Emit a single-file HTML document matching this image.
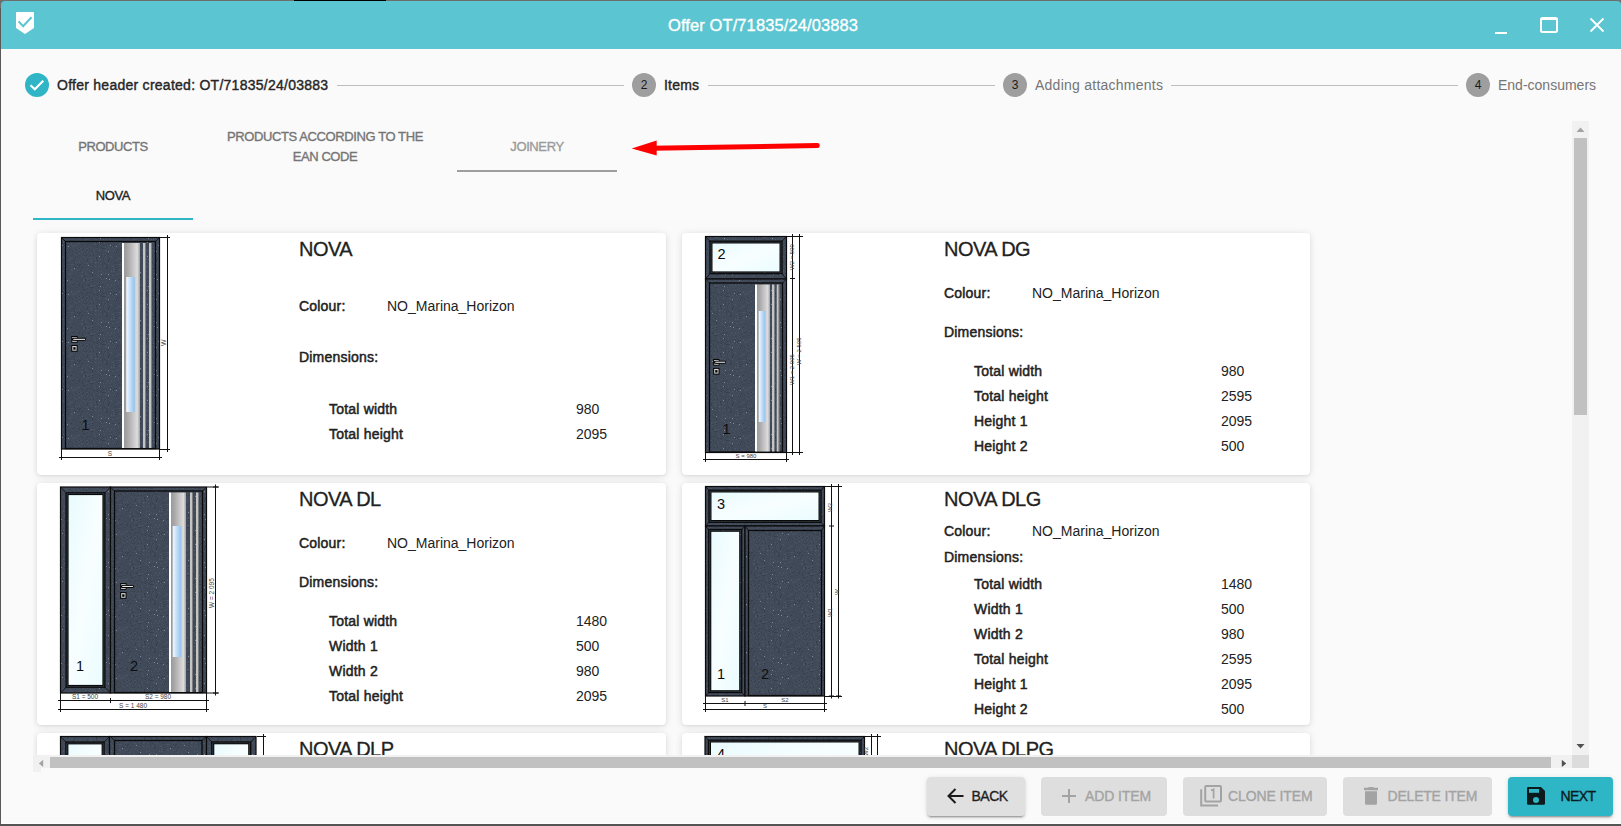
<!DOCTYPE html>
<html><head><meta charset="utf-8">
<style>
*{box-sizing:border-box;margin:0;padding:0}
html,body{width:1621px;height:826px;overflow:hidden;background:#fafafa;font-family:"Liberation Sans",sans-serif}
.a{position:absolute;white-space:nowrap}
.card{position:absolute;background:#fff;border-radius:4px;box-shadow:0 1px 7px 0 rgba(0,0,0,0.13),0 1px 2px 0 rgba(0,0,0,0.05)}
.ttl{position:absolute;font-size:20px;line-height:20px;color:#222;white-space:nowrap;letter-spacing:-0.5px;-webkit-text-stroke:0.3px currentColor}
.lb{position:absolute;font-size:14px;line-height:16px;color:#222;white-space:nowrap;letter-spacing:0.2px;-webkit-text-stroke:0.5px currentColor}
.vl{position:absolute;font-size:14px;line-height:16px;color:#222;white-space:nowrap}
.btn{position:absolute;top:777px;height:39px;border-radius:4px;background:#dedede;font-size:14px;color:#a8a8a8;line-height:39px;letter-spacing:0.3px;white-space:nowrap}
</style></head><body>
<svg width="0" height="0" style="position:absolute"><defs>
<pattern id="gran" x="0" y="0" width="48" height="48" patternUnits="userSpaceOnUse"><rect width="48" height="48" fill="#404a59"/><rect x="39" y="16" width="1" height="1" fill="#47505f"/><rect x="22" y="44" width="1" height="1" fill="#47505f"/><rect x="41" y="33" width="1" height="1" fill="#4b5565"/><rect x="29" y="15" width="1" height="1" fill="#47505f"/><rect x="3" y="10" width="1" height="1" fill="#4b5565"/><rect x="23" y="30" width="1" height="1" fill="#4b5565"/><rect x="24" y="34" width="1" height="1" fill="#4b5565"/><rect x="36" y="15" width="1" height="1" fill="#4b5565"/><rect x="46" y="13" width="1" height="1" fill="#4e5868"/><rect x="17" y="11" width="1" height="1" fill="#4e5868"/><rect x="10" y="4" width="1" height="1" fill="#4b5565"/><rect x="39" y="39" width="1" height="1" fill="#4e5868"/><rect x="8" y="8" width="1" height="1" fill="#4b5565"/><rect x="0" y="13" width="1" height="1" fill="#4b5565"/><rect x="10" y="10" width="1" height="1" fill="#4e5868"/><rect x="20" y="12" width="1" height="1" fill="#47505f"/><rect x="43" y="40" width="1" height="1" fill="#4b5565"/><rect x="11" y="44" width="1" height="1" fill="#4b5565"/><rect x="24" y="19" width="1" height="1" fill="#4b5565"/><rect x="23" y="26" width="1" height="1" fill="#4b5565"/><rect x="9" y="16" width="1" height="1" fill="#4b5565"/><rect x="21" y="19" width="1" height="1" fill="#47505f"/><rect x="37" y="0" width="1" height="1" fill="#47505f"/><rect x="43" y="45" width="1" height="1" fill="#4e5868"/><rect x="4" y="19" width="1" height="1" fill="#4e5868"/><rect x="19" y="30" width="1" height="1" fill="#47505f"/><rect x="20" y="11" width="1" height="1" fill="#4e5868"/><rect x="30" y="45" width="1" height="1" fill="#4b5565"/><rect x="3" y="16" width="1" height="1" fill="#4b5565"/><rect x="47" y="22" width="1" height="1" fill="#4e5868"/><rect x="1" y="35" width="1" height="1" fill="#4e5868"/><rect x="23" y="24" width="1" height="1" fill="#47505f"/><rect x="0" y="28" width="1" height="1" fill="#4b5565"/><rect x="45" y="11" width="1" height="1" fill="#47505f"/><rect x="12" y="7" width="1" height="1" fill="#4b5565"/><rect x="29" y="22" width="1" height="1" fill="#47505f"/><rect x="22" y="33" width="1" height="1" fill="#4e5868"/><rect x="29" y="6" width="1" height="1" fill="#47505f"/><rect x="47" y="23" width="1" height="1" fill="#4e5868"/><rect x="2" y="27" width="1" height="1" fill="#4b5565"/><rect x="13" y="21" width="1" height="1" fill="#47505f"/><rect x="39" y="23" width="1" height="1" fill="#4b5565"/><rect x="21" y="17" width="1" height="1" fill="#47505f"/><rect x="34" y="5" width="1" height="1" fill="#4e5868"/><rect x="43" y="20" width="1" height="1" fill="#4e5868"/><rect x="11" y="5" width="1" height="1" fill="#47505f"/><rect x="9" y="46" width="1" height="1" fill="#47505f"/><rect x="19" y="30" width="1" height="1" fill="#4b5565"/><rect x="46" y="3" width="1" height="1" fill="#4b5565"/><rect x="38" y="34" width="1" height="1" fill="#4e5868"/><rect x="2" y="15" width="1" height="1" fill="#47505f"/><rect x="38" y="22" width="1" height="1" fill="#4e5868"/><rect x="29" y="41" width="1" height="1" fill="#4e5868"/><rect x="9" y="3" width="1" height="1" fill="#47505f"/><rect x="2" y="31" width="1" height="1" fill="#4e5868"/><rect x="13" y="8" width="1" height="1" fill="#47505f"/><rect x="36" y="8" width="1" height="1" fill="#47505f"/><rect x="26" y="6" width="1" height="1" fill="#4b5565"/><rect x="27" y="23" width="1" height="1" fill="#4b5565"/><rect x="3" y="26" width="1" height="1" fill="#4e5868"/><rect x="9" y="29" width="1" height="1" fill="#47505f"/><rect x="10" y="33" width="1" height="1" fill="#4e5868"/><rect x="31" y="44" width="1" height="1" fill="#47505f"/><rect x="20" y="30" width="1" height="1" fill="#4e5868"/><rect x="18" y="30" width="1" height="1" fill="#4e5868"/><rect x="9" y="7" width="1" height="1" fill="#4e5868"/><rect x="34" y="11" width="1" height="1" fill="#47505f"/><rect x="31" y="21" width="1" height="1" fill="#4b5565"/><rect x="5" y="31" width="1" height="1" fill="#4e5868"/><rect x="32" y="35" width="1" height="1" fill="#47505f"/><rect x="23" y="4" width="1" height="1" fill="#4e5868"/><rect x="44" y="37" width="1" height="1" fill="#47505f"/><rect x="2" y="19" width="1" height="1" fill="#4e5868"/><rect x="35" y="45" width="1" height="1" fill="#47505f"/><rect x="17" y="31" width="1" height="1" fill="#4e5868"/><rect x="44" y="45" width="1" height="1" fill="#4e5868"/><rect x="21" y="41" width="1" height="1" fill="#4b5565"/><rect x="37" y="0" width="1" height="1" fill="#4e5868"/><rect x="35" y="16" width="1" height="1" fill="#4e5868"/><rect x="42" y="17" width="1" height="1" fill="#4e5868"/><rect x="18" y="32" width="1" height="1" fill="#47505f"/><rect x="43" y="22" width="1" height="1" fill="#4e5868"/><rect x="17" y="41" width="1" height="1" fill="#4e5868"/><rect x="47" y="26" width="1" height="1" fill="#4e5868"/><rect x="11" y="44" width="1" height="1" fill="#4e5868"/><rect x="23" y="21" width="1" height="1" fill="#47505f"/><rect x="9" y="33" width="1" height="1" fill="#4b5565"/><rect x="12" y="23" width="1" height="1" fill="#4e5868"/><rect x="18" y="44" width="1" height="1" fill="#4b5565"/><rect x="46" y="42" width="1" height="1" fill="#47505f"/><rect x="26" y="10" width="1" height="1" fill="#47505f"/><rect x="37" y="33" width="1" height="1" fill="#47505f"/><rect x="26" y="19" width="1" height="1" fill="#47505f"/><rect x="35" y="40" width="1" height="1" fill="#4e5868"/><rect x="46" y="1" width="1" height="1" fill="#4b5565"/><rect x="10" y="37" width="1" height="1" fill="#4e5868"/><rect x="39" y="41" width="1" height="1" fill="#4b5565"/><rect x="14" y="43" width="1" height="1" fill="#4b5565"/><rect x="40" y="45" width="1" height="1" fill="#4b5565"/><rect x="30" y="14" width="1" height="1" fill="#4b5565"/><rect x="3" y="8" width="1" height="1" fill="#4b5565"/><rect x="20" y="11" width="1" height="1" fill="#4e5868"/><rect x="12" y="35" width="1" height="1" fill="#4b5565"/><rect x="26" y="29" width="1" height="1" fill="#4e5868"/><rect x="24" y="42" width="1" height="1" fill="#47505f"/><rect x="4" y="37" width="1" height="1" fill="#4b5565"/><rect x="15" y="45" width="1" height="1" fill="#4e5868"/><rect x="0" y="22" width="1" height="1" fill="#4e5868"/><rect x="17" y="26" width="1" height="1" fill="#4b5565"/><rect x="44" y="35" width="1" height="1" fill="#4e5868"/><rect x="2" y="35" width="1" height="1" fill="#47505f"/><rect x="19" y="6" width="1" height="1" fill="#4e5868"/><rect x="34" y="32" width="1" height="1" fill="#4e5868"/><rect x="37" y="18" width="1" height="1" fill="#4e5868"/><rect x="8" y="26" width="1" height="1" fill="#4e5868"/><rect x="36" y="41" width="1" height="1" fill="#47505f"/><rect x="23" y="29" width="1" height="1" fill="#4b5565"/><rect x="10" y="38" width="1" height="1" fill="#4e5868"/><rect x="36" y="30" width="1" height="1" fill="#4b5565"/><rect x="8" y="38" width="1" height="1" fill="#4b5565"/><rect x="22" y="42" width="1" height="1" fill="#4b5565"/><rect x="24" y="6" width="1" height="1" fill="#4e5868"/><rect x="36" y="39" width="1" height="1" fill="#47505f"/><rect x="9" y="20" width="1" height="1" fill="#47505f"/><rect x="36" y="24" width="1" height="1" fill="#4e5868"/><rect x="27" y="14" width="1" height="1" fill="#4e5868"/><rect x="18" y="30" width="1" height="1" fill="#47505f"/><rect x="24" y="24" width="1" height="1" fill="#4b5565"/><rect x="38" y="38" width="1" height="1" fill="#4e5868"/><rect x="47" y="19" width="1" height="1" fill="#4e5868"/><rect x="16" y="26" width="1" height="1" fill="#4b5565"/><rect x="20" y="19" width="1" height="1" fill="#4e5868"/><rect x="18" y="9" width="1" height="1" fill="#4e5868"/><rect x="1" y="7" width="1" height="1" fill="#47505f"/><rect x="39" y="28" width="1" height="1" fill="#4b5565"/><rect x="18" y="2" width="1" height="1" fill="#4b5565"/><rect x="25" y="0" width="1" height="1" fill="#4e5868"/><rect x="34" y="35" width="1" height="1" fill="#4e5868"/><rect x="15" y="30" width="1" height="1" fill="#4b5565"/><rect x="15" y="31" width="1" height="1" fill="#4e5868"/><rect x="9" y="46" width="1" height="1" fill="#4e5868"/><rect x="18" y="31" width="1" height="1" fill="#47505f"/><rect x="30" y="33" width="1" height="1" fill="#47505f"/><rect x="38" y="47" width="1" height="1" fill="#4b5565"/><rect x="1" y="8" width="1" height="1" fill="#4e5868"/><rect x="18" y="34" width="1" height="1" fill="#47505f"/><rect x="21" y="39" width="1" height="1" fill="#4e5868"/><rect x="46" y="33" width="1" height="1" fill="#4b5565"/><rect x="29" y="22" width="1" height="1" fill="#4e5868"/><rect x="43" y="47" width="1" height="1" fill="#47505f"/><rect x="8" y="2" width="1" height="1" fill="#4b5565"/><rect x="16" y="35" width="1" height="1" fill="#4e5868"/><rect x="43" y="6" width="1" height="1" fill="#47505f"/><rect x="34" y="12" width="1" height="1" fill="#4b5565"/><rect x="27" y="27" width="1" height="1" fill="#47505f"/><rect x="36" y="44" width="1" height="1" fill="#47505f"/><rect x="40" y="41" width="1" height="1" fill="#4e5868"/><rect x="24" y="30" width="1" height="1" fill="#4e5868"/><rect x="43" y="46" width="1" height="1" fill="#4b5565"/><rect x="18" y="29" width="1" height="1" fill="#4b5565"/><rect x="19" y="0" width="1" height="1" fill="#47505f"/><rect x="27" y="37" width="1" height="1" fill="#4e5868"/><rect x="41" y="30" width="1" height="1" fill="#4e5868"/><rect x="9" y="10" width="1" height="1" fill="#4e5868"/><rect x="44" y="35" width="1" height="1" fill="#4e5868"/><rect x="21" y="34" width="1" height="1" fill="#4b5565"/><rect x="27" y="37" width="1" height="1" fill="#47505f"/><rect x="3" y="4" width="1" height="1" fill="#47505f"/><rect x="14" y="17" width="1" height="1" fill="#4b5565"/><rect x="4" y="42" width="1" height="1" fill="#4b5565"/><rect x="21" y="46" width="1" height="1" fill="#4e5868"/><rect x="4" y="25" width="1" height="1" fill="#47505f"/><rect x="31" y="3" width="1" height="1" fill="#4b5565"/><rect x="7" y="14" width="1" height="1" fill="#47505f"/><rect x="41" y="7" width="1" height="1" fill="#47505f"/><rect x="8" y="18" width="1" height="1" fill="#47505f"/><rect x="28" y="9" width="1" height="1" fill="#4b5565"/><rect x="39" y="11" width="1" height="1" fill="#4e5868"/><rect x="10" y="4" width="1" height="1" fill="#47505f"/><rect x="13" y="2" width="1" height="1" fill="#47505f"/><rect x="6" y="42" width="1" height="1" fill="#4e5868"/><rect x="47" y="4" width="1" height="1" fill="#4e5868"/><rect x="3" y="36" width="1" height="1" fill="#47505f"/><rect x="7" y="47" width="1" height="1" fill="#4e5868"/><rect x="39" y="8" width="1" height="1" fill="#4b5565"/><rect x="27" y="5" width="1" height="1" fill="#4e5868"/><rect x="43" y="38" width="1" height="1" fill="#4e5868"/><rect x="31" y="22" width="1" height="1" fill="#47505f"/><rect x="23" y="3" width="1" height="1" fill="#4b5565"/><rect x="44" y="18" width="1" height="1" fill="#4b5565"/><rect x="36" y="40" width="1" height="1" fill="#47505f"/><rect x="32" y="18" width="1" height="1" fill="#47505f"/><rect x="35" y="39" width="1" height="1" fill="#4b5565"/><rect x="16" y="4" width="1" height="1" fill="#47505f"/><rect x="15" y="16" width="1" height="1" fill="#4e5868"/><rect x="33" y="8" width="1" height="1" fill="#4b5565"/><rect x="23" y="29" width="1" height="1" fill="#47505f"/><rect x="24" y="11" width="1" height="1" fill="#4b5565"/><rect x="45" y="1" width="1" height="1" fill="#47505f"/><rect x="21" y="5" width="1" height="1" fill="#47505f"/><rect x="42" y="2" width="1" height="1" fill="#4b5565"/><rect x="7" y="32" width="1" height="1" fill="#47505f"/><rect x="29" y="15" width="1" height="1" fill="#4e5868"/><rect x="29" y="30" width="1" height="1" fill="#4e5868"/><rect x="6" y="33" width="1" height="1" fill="#4b5565"/><rect x="34" y="46" width="1" height="1" fill="#4e5868"/><rect x="3" y="9" width="1" height="1" fill="#4e5868"/><rect x="43" y="14" width="1" height="1" fill="#47505f"/><rect x="7" y="5" width="1" height="1" fill="#47505f"/><rect x="31" y="13" width="1" height="1" fill="#4b5565"/><rect x="44" y="39" width="1" height="1" fill="#4e5868"/><rect x="22" y="15" width="1" height="1" fill="#4e5868"/><rect x="21" y="39" width="1" height="1" fill="#47505f"/><rect x="22" y="24" width="1" height="1" fill="#4e5868"/><rect x="8" y="46" width="1" height="1" fill="#4e5868"/><rect x="41" y="18" width="1" height="1" fill="#47505f"/><rect x="27" y="23" width="1" height="1" fill="#47505f"/><rect x="2" y="37" width="1" height="1" fill="#47505f"/><rect x="13" y="47" width="1" height="1" fill="#4b5565"/><rect x="25" y="4" width="1" height="1" fill="#4b5565"/><rect x="2" y="2" width="1" height="1" fill="#4b5565"/><rect x="12" y="12" width="1" height="1" fill="#4b5565"/><rect x="31" y="30" width="1" height="1" fill="#47505f"/><rect x="22" y="0" width="1" height="1" fill="#4e5868"/><rect x="30" y="19" width="1" height="1" fill="#47505f"/><rect x="27" y="20" width="1" height="1" fill="#4e5868"/><rect x="29" y="6" width="1" height="1" fill="#4b5565"/><rect x="9" y="41" width="1" height="1" fill="#4b5565"/><rect x="4" y="23" width="1" height="1" fill="#4e5868"/><rect x="30" y="9" width="1" height="1" fill="#47505f"/><rect x="16" y="7" width="1" height="1" fill="#4e5868"/><rect x="10" y="18" width="1" height="1" fill="#47505f"/><rect x="15" y="2" width="1" height="1" fill="#4e5868"/><rect x="2" y="22" width="1" height="1" fill="#4e5868"/><rect x="20" y="3" width="1" height="1" fill="#47505f"/><rect x="1" y="43" width="1" height="1" fill="#4e5868"/><rect x="30" y="9" width="1" height="1" fill="#4b5565"/><rect x="42" y="20" width="1" height="1" fill="#4e5868"/><rect x="29" y="43" width="1" height="1" fill="#4b5565"/><rect x="46" y="10" width="1" height="1" fill="#4b5565"/><rect x="12" y="45" width="1" height="1" fill="#4b5565"/><rect x="36" y="14" width="1" height="1" fill="#47505f"/><rect x="5" y="39" width="1" height="1" fill="#4e5868"/><rect x="45" y="23" width="1" height="1" fill="#47505f"/><rect x="19" y="11" width="1" height="1" fill="#4e5868"/><rect x="23" y="18" width="1" height="1" fill="#4b5565"/><rect x="46" y="45" width="1" height="1" fill="#4e5868"/><rect x="10" y="15" width="1" height="1" fill="#4b5565"/><rect x="43" y="13" width="1" height="1" fill="#4b5565"/><rect x="41" y="38" width="1" height="1" fill="#4e5868"/><rect x="46" y="17" width="1" height="1" fill="#4b5565"/><rect x="29" y="3" width="1" height="1" fill="#4e5868"/><rect x="43" y="26" width="1" height="1" fill="#4b5565"/><rect x="2" y="2" width="1" height="1" fill="#47505f"/><rect x="33" y="36" width="1" height="1" fill="#4e5868"/><rect x="6" y="45" width="1" height="1" fill="#4b5565"/><rect x="15" y="31" width="1" height="1" fill="#4b5565"/><rect x="30" y="3" width="1" height="1" fill="#47505f"/><rect x="15" y="41" width="1" height="1" fill="#4b5565"/><rect x="31" y="25" width="1" height="1" fill="#4b5565"/><rect x="3" y="16" width="1" height="1" fill="#7e8897"/><rect x="26" y="28" width="1" height="1" fill="#7e8897"/><rect x="19" y="40" width="1" height="1" fill="#7e8897"/><rect x="3" y="2" width="1" height="1" fill="#7e8897"/><rect x="12" y="11" width="1" height="1" fill="#7e8897"/><rect x="44" y="32" width="1" height="1" fill="#7e8897"/><rect x="40" y="25" width="1" height="1" fill="#7e8897"/><rect x="12" y="34" width="1" height="1" fill="#7e8897"/><rect x="14" y="5" width="1" height="1" fill="#7e8897"/><rect x="20" y="6" width="1" height="1" fill="#7e8897"/><rect x="5" y="34" width="1" height="1" fill="#7e8897"/><rect x="10" y="38" width="1" height="1" fill="#7e8897"/><rect x="4" y="46" width="1" height="1" fill="#7e8897"/><rect x="13" y="39" width="1" height="1" fill="#7e8897"/><rect x="1" y="28" width="1" height="1" fill="#373f4c"/><rect x="34" y="22" width="1" height="1" fill="#373f4c"/><rect x="31" y="27" width="1" height="1" fill="#373f4c"/><rect x="36" y="24" width="1" height="1" fill="#373f4c"/><rect x="33" y="40" width="1" height="1" fill="#373f4c"/><rect x="8" y="46" width="1" height="1" fill="#373f4c"/><rect x="0" y="19" width="1" height="1" fill="#373f4c"/><rect x="44" y="28" width="1" height="1" fill="#373f4c"/><rect x="14" y="35" width="1" height="1" fill="#373f4c"/><rect x="7" y="8" width="1" height="1" fill="#373f4c"/><rect x="19" y="30" width="1" height="1" fill="#373f4c"/><rect x="5" y="16" width="1" height="1" fill="#373f4c"/><rect x="25" y="20" width="1" height="1" fill="#373f4c"/><rect x="8" y="8" width="1" height="1" fill="#373f4c"/><rect x="34" y="5" width="1" height="1" fill="#373f4c"/><rect x="30" y="15" width="1" height="1" fill="#373f4c"/><rect x="44" y="5" width="1" height="1" fill="#373f4c"/><rect x="27" y="36" width="1" height="1" fill="#373f4c"/><rect x="42" y="15" width="1" height="1" fill="#373f4c"/><rect x="17" y="3" width="1" height="1" fill="#373f4c"/><rect x="31" y="44" width="1" height="1" fill="#373f4c"/><rect x="15" y="3" width="1" height="1" fill="#373f4c"/><rect x="45" y="12" width="1" height="1" fill="#373f4c"/><rect x="18" y="23" width="1" height="1" fill="#373f4c"/><rect x="6" y="4" width="1" height="1" fill="#373f4c"/><rect x="26" y="20" width="1" height="1" fill="#373f4c"/><rect x="24" y="35" width="1" height="1" fill="#373f4c"/><rect x="0" y="18" width="1" height="1" fill="#373f4c"/><rect x="41" y="8" width="1" height="1" fill="#373f4c"/><rect x="36" y="1" width="1" height="1" fill="#373f4c"/><rect x="28" y="9" width="1" height="1" fill="#373f4c"/><rect x="44" y="41" width="1" height="1" fill="#373f4c"/><rect x="1" y="46" width="1" height="1" fill="#373f4c"/><rect x="3" y="44" width="1" height="1" fill="#373f4c"/><rect x="27" y="17" width="1" height="1" fill="#373f4c"/><rect x="6" y="24" width="1" height="1" fill="#373f4c"/><rect x="35" y="8" width="1" height="1" fill="#373f4c"/><rect x="20" y="4" width="1" height="1" fill="#373f4c"/><rect x="19" y="10" width="1" height="1" fill="#373f4c"/><rect x="8" y="16" width="1" height="1" fill="#373f4c"/><rect x="31" y="43" width="1" height="1" fill="#373f4c"/><rect x="20" y="18" width="1" height="1" fill="#373f4c"/><rect x="2" y="4" width="1" height="1" fill="#373f4c"/><rect x="34" y="47" width="1" height="1" fill="#373f4c"/><rect x="35" y="1" width="1" height="1" fill="#373f4c"/><rect x="1" y="7" width="1" height="1" fill="#373f4c"/><rect x="3" y="8" width="1" height="1" fill="#373f4c"/><rect x="22" y="27" width="1" height="1" fill="#373f4c"/><rect x="16" y="39" width="1" height="1" fill="#373f4c"/><rect x="1" y="14" width="1" height="1" fill="#373f4c"/><rect x="33" y="27" width="1" height="1" fill="#373f4c"/><rect x="8" y="23" width="1" height="1" fill="#373f4c"/><rect x="12" y="21" width="1" height="1" fill="#373f4c"/><rect x="22" y="0" width="1" height="1" fill="#373f4c"/><rect x="10" y="37" width="1" height="1" fill="#373f4c"/><rect x="39" y="10" width="1" height="1" fill="#373f4c"/><rect x="46" y="6" width="1" height="1" fill="#373f4c"/><rect x="17" y="33" width="1" height="1" fill="#373f4c"/><rect x="38" y="10" width="1" height="1" fill="#373f4c"/><rect x="40" y="45" width="1" height="1" fill="#373f4c"/><rect x="9" y="28" width="1" height="1" fill="#373f4c"/><rect x="27" y="27" width="1" height="1" fill="#373f4c"/><rect x="7" y="21" width="1" height="1" fill="#373f4c"/><rect x="20" y="28" width="1" height="1" fill="#373f4c"/><rect x="14" y="29" width="1" height="1" fill="#373f4c"/><rect x="38" y="27" width="1" height="1" fill="#373f4c"/><rect x="10" y="28" width="1" height="1" fill="#373f4c"/><rect x="3" y="42" width="1" height="1" fill="#373f4c"/><rect x="10" y="34" width="1" height="1" fill="#373f4c"/><rect x="30" y="31" width="1" height="1" fill="#373f4c"/><rect x="38" y="0" width="1" height="1" fill="#373f4c"/><rect x="6" y="8" width="1" height="1" fill="#373f4c"/><rect x="26" y="43" width="1" height="1" fill="#373f4c"/><rect x="3" y="13" width="1" height="1" fill="#373f4c"/><rect x="0" y="2" width="1" height="1" fill="#373f4c"/><rect x="36" y="15" width="1" height="1" fill="#373f4c"/><rect x="30" y="45" width="1" height="1" fill="#373f4c"/><rect x="22" y="25" width="1" height="1" fill="#373f4c"/><rect x="29" y="13" width="1" height="1" fill="#373f4c"/><rect x="12" y="17" width="1" height="1" fill="#373f4c"/><rect x="12" y="19" width="1" height="1" fill="#373f4c"/><rect x="35" y="33" width="1" height="1" fill="#373f4c"/><rect x="22" y="15" width="1" height="1" fill="#373f4c"/><rect x="23" y="22" width="1" height="1" fill="#373f4c"/><rect x="15" y="42" width="1" height="1" fill="#373f4c"/><rect x="3" y="39" width="1" height="1" fill="#373f4c"/><rect x="31" y="25" width="1" height="1" fill="#373f4c"/><rect x="22" y="9" width="1" height="1" fill="#373f4c"/><rect x="9" y="15" width="1" height="1" fill="#373f4c"/><rect x="31" y="24" width="1" height="1" fill="#373f4c"/><rect x="2" y="6" width="1" height="1" fill="#373f4c"/><rect x="10" y="25" width="1" height="1" fill="#373f4c"/><rect x="6" y="45" width="1" height="1" fill="#373f4c"/><rect x="18" y="12" width="1" height="1" fill="#373f4c"/><rect x="20" y="30" width="1" height="1" fill="#373f4c"/><rect x="43" y="30" width="1" height="1" fill="#373f4c"/><rect x="34" y="39" width="1" height="1" fill="#373f4c"/><rect x="5" y="12" width="1" height="1" fill="#373f4c"/><rect x="24" y="44" width="1" height="1" fill="#373f4c"/><rect x="0" y="6" width="1" height="1" fill="#373f4c"/><rect x="32" y="38" width="1" height="1" fill="#373f4c"/><rect x="37" y="39" width="1" height="1" fill="#373f4c"/><rect x="11" y="24" width="1" height="1" fill="#373f4c"/><rect x="1" y="20" width="1" height="1" fill="#373f4c"/><rect x="43" y="1" width="1" height="1" fill="#373f4c"/><rect x="39" y="19" width="1" height="1" fill="#373f4c"/><rect x="32" y="24" width="1" height="1" fill="#373f4c"/><rect x="32" y="30" width="1" height="1" fill="#373f4c"/><rect x="34" y="45" width="1" height="1" fill="#373f4c"/><rect x="44" y="25" width="1" height="1" fill="#373f4c"/><rect x="28" y="37" width="1" height="1" fill="#373f4c"/><rect x="44" y="35" width="1" height="1" fill="#373f4c"/><rect x="42" y="3" width="1" height="1" fill="#373f4c"/><rect x="34" y="9" width="1" height="1" fill="#373f4c"/><rect x="26" y="23" width="1" height="1" fill="#373f4c"/><rect x="37" y="1" width="1" height="1" fill="#373f4c"/><rect x="43" y="33" width="1" height="1" fill="#373f4c"/><rect x="13" y="18" width="1" height="1" fill="#373f4c"/><rect x="18" y="4" width="1" height="1" fill="#373f4c"/><rect x="1" y="5" width="1" height="1" fill="#373f4c"/><rect x="22" y="39" width="1" height="1" fill="#373f4c"/><rect x="37" y="45" width="1" height="1" fill="#373f4c"/><rect x="26" y="19" width="1" height="1" fill="#373f4c"/><rect x="0" y="17" width="1" height="1" fill="#373f4c"/><rect x="45" y="15" width="1" height="1" fill="#373f4c"/><rect x="4" y="2" width="1" height="1" fill="#373f4c"/><rect x="5" y="42" width="1" height="1" fill="#373f4c"/><rect x="19" y="22" width="1" height="1" fill="#373f4c"/><rect x="44" y="47" width="1" height="1" fill="#373f4c"/><rect x="38" y="39" width="1" height="1" fill="#373f4c"/><rect x="35" y="13" width="1" height="1" fill="#373f4c"/><rect x="30" y="33" width="1" height="1" fill="#373f4c"/><rect x="5" y="7" width="1" height="1" fill="#373f4c"/><rect x="15" y="21" width="1" height="1" fill="#373f4c"/><rect x="34" y="27" width="1" height="1" fill="#373f4c"/><rect x="25" y="0" width="1" height="1" fill="#373f4c"/><rect x="42" y="24" width="1" height="1" fill="#373f4c"/><rect x="24" y="11" width="1" height="1" fill="#373f4c"/><rect x="41" y="33" width="1" height="1" fill="#373f4c"/><rect x="13" y="43" width="1" height="1" fill="#373f4c"/><rect x="39" y="20" width="1" height="1" fill="#373f4c"/><rect x="24" y="20" width="1" height="1" fill="#373f4c"/><rect x="6" y="44" width="1" height="1" fill="#373f4c"/><rect x="35" y="44" width="1" height="1" fill="#373f4c"/><rect x="45" y="23" width="1" height="1" fill="#373f4c"/><rect x="15" y="6" width="1" height="1" fill="#373f4c"/><rect x="13" y="18" width="1" height="1" fill="#373f4c"/><rect x="19" y="17" width="1" height="1" fill="#373f4c"/><rect x="39" y="4" width="1" height="1" fill="#373f4c"/><rect x="10" y="4" width="1" height="1" fill="#373f4c"/><rect x="40" y="26" width="1" height="1" fill="#373f4c"/><rect x="11" y="14" width="1" height="1" fill="#373f4c"/><rect x="41" y="4" width="1" height="1" fill="#373f4c"/><rect x="36" y="36" width="1" height="1" fill="#373f4c"/><rect x="40" y="40" width="1" height="1" fill="#373f4c"/><rect x="34" y="46" width="1" height="1" fill="#373f4c"/><rect x="26" y="26" width="1" height="1" fill="#373f4c"/><rect x="14" y="27" width="1" height="1" fill="#373f4c"/><rect x="30" y="33" width="1" height="1" fill="#373f4c"/><rect x="38" y="15" width="1" height="1" fill="#373f4c"/><rect x="19" y="26" width="1" height="1" fill="#373f4c"/><rect x="17" y="5" width="1" height="1" fill="#373f4c"/><rect x="38" y="21" width="1" height="1" fill="#373f4c"/><rect x="11" y="26" width="1" height="1" fill="#373f4c"/><rect x="1" y="9" width="1" height="1" fill="#373f4c"/><rect x="7" y="18" width="1" height="1" fill="#373f4c"/><rect x="36" y="35" width="1" height="1" fill="#373f4c"/><rect x="38" y="36" width="1" height="1" fill="#373f4c"/><rect x="11" y="27" width="1" height="1" fill="#373f4c"/><rect x="12" y="20" width="1" height="1" fill="#373f4c"/><rect x="38" y="6" width="1" height="1" fill="#373f4c"/><rect x="41" y="44" width="1" height="1" fill="#373f4c"/><rect x="21" y="46" width="1" height="1" fill="#373f4c"/><rect x="4" y="3" width="1" height="1" fill="#373f4c"/><rect x="31" y="8" width="1" height="1" fill="#373f4c"/><rect x="33" y="4" width="1" height="1" fill="#373f4c"/><rect x="20" y="12" width="1" height="1" fill="#373f4c"/><rect x="29" y="41" width="1" height="1" fill="#373f4c"/><rect x="24" y="14" width="1" height="1" fill="#373f4c"/><rect x="44" y="39" width="1" height="1" fill="#373f4c"/><rect x="30" y="6" width="1" height="1" fill="#373f4c"/><rect x="0" y="12" width="1" height="1" fill="#373f4c"/><rect x="43" y="10" width="1" height="1" fill="#373f4c"/><rect x="7" y="5" width="1" height="1" fill="#373f4c"/><rect x="21" y="9" width="1" height="1" fill="#373f4c"/><rect x="23" y="39" width="1" height="1" fill="#373f4c"/><rect x="6" y="36" width="1" height="1" fill="#373f4c"/><rect x="28" y="47" width="1" height="1" fill="#373f4c"/><rect x="20" y="11" width="1" height="1" fill="#373f4c"/><rect x="45" y="35" width="1" height="1" fill="#373f4c"/><rect x="37" y="40" width="1" height="1" fill="#373f4c"/><rect x="6" y="23" width="1" height="1" fill="#373f4c"/><rect x="6" y="4" width="1" height="1" fill="#373f4c"/><rect x="12" y="13" width="1" height="1" fill="#373f4c"/><rect x="20" y="23" width="1" height="1" fill="#373f4c"/><rect x="11" y="29" width="1" height="1" fill="#373f4c"/><rect x="43" y="47" width="1" height="1" fill="#373f4c"/><rect x="5" y="15" width="1" height="1" fill="#373f4c"/><rect x="25" y="34" width="1" height="1" fill="#373f4c"/><rect x="29" y="24" width="1" height="1" fill="#373f4c"/></pattern>
<linearGradient id="bar" x1="0" x2="1" y1="0" y2="0">
<stop offset="0" stop-color="#ffffff"/><stop offset="0.1" stop-color="#ffffff"/><stop offset="0.13" stop-color="#9a9a9a"/><stop offset="0.35" stop-color="#ababab"/><stop offset="0.85" stop-color="#dddddd"/><stop offset="1" stop-color="#a0a0a0"/></linearGradient>
<linearGradient id="bglass" x1="0" x2="1" y1="0" y2="0">
<stop offset="0" stop-color="#f2f8ff"/><stop offset="1" stop-color="#90c2f0"/></linearGradient>
<linearGradient id="glass" x1="0" x2="1" y1="0" y2="1">
<stop offset="0" stop-color="#e8fbfe"/><stop offset="0.5" stop-color="#f8feff"/><stop offset="1" stop-color="#eafcff"/></linearGradient>
</defs></svg><div class="a" style="left:33px;top:121px;width:1539px;height:634px;overflow:hidden"><div class="a" style="left:-33px;top:-121px;width:1621px;height:826px"><div class="card" style="left:37px;top:233px;width:629px;height:242px"></div><div class="card" style="left:37px;top:483px;width:629px;height:242px"></div><div class="card" style="left:37px;top:733px;width:629px;height:242px"></div><div class="card" style="left:682px;top:233px;width:628px;height:242px"></div><div class="card" style="left:682px;top:483px;width:628px;height:242px"></div><div class="card" style="left:682px;top:733px;width:628px;height:242px"></div><div class="ttl" style="left:299px;top:239px">NOVA</div><div class="lb" style="left:299px;top:298px">Colour:</div><div class="vl" style="left:387px;top:298px">NO_Marina_Horizon</div><div class="lb" style="left:299px;top:349px">Dimensions:</div><div class="lb" style="left:329px;top:401px">Total width</div><div class="vl" style="left:576px;top:401px">980</div><div class="lb" style="left:329px;top:426px">Total height</div><div class="vl" style="left:576px;top:426px">2095</div><div class="ttl" style="left:944px;top:239px">NOVA DG</div><div class="lb" style="left:944px;top:285px">Colour:</div><div class="vl" style="left:1032px;top:285px">NO_Marina_Horizon</div><div class="lb" style="left:944px;top:324px">Dimensions:</div><div class="lb" style="left:974px;top:363px">Total width</div><div class="vl" style="left:1221px;top:363px">980</div><div class="lb" style="left:974px;top:388px">Total height</div><div class="vl" style="left:1221px;top:388px">2595</div><div class="lb" style="left:974px;top:413px">Height 1</div><div class="vl" style="left:1221px;top:413px">2095</div><div class="lb" style="left:974px;top:438px">Height 2</div><div class="vl" style="left:1221px;top:438px">500</div><div class="ttl" style="left:299px;top:489px">NOVA DL</div><div class="lb" style="left:299px;top:535px">Colour:</div><div class="vl" style="left:387px;top:535px">NO_Marina_Horizon</div><div class="lb" style="left:299px;top:574px">Dimensions:</div><div class="lb" style="left:329px;top:613px">Total width</div><div class="vl" style="left:576px;top:613px">1480</div><div class="lb" style="left:329px;top:638px">Width 1</div><div class="vl" style="left:576px;top:638px">500</div><div class="lb" style="left:329px;top:663px">Width 2</div><div class="vl" style="left:576px;top:663px">980</div><div class="lb" style="left:329px;top:688px">Total height</div><div class="vl" style="left:576px;top:688px">2095</div><div class="ttl" style="left:944px;top:489px">NOVA DLG</div><div class="lb" style="left:944px;top:523px">Colour:</div><div class="vl" style="left:1032px;top:523px">NO_Marina_Horizon</div><div class="lb" style="left:944px;top:549px">Dimensions:</div><div class="lb" style="left:974px;top:576px">Total width</div><div class="vl" style="left:1221px;top:576px">1480</div><div class="lb" style="left:974px;top:601px">Width 1</div><div class="vl" style="left:1221px;top:601px">500</div><div class="lb" style="left:974px;top:626px">Width 2</div><div class="vl" style="left:1221px;top:626px">980</div><div class="lb" style="left:974px;top:651px">Total height</div><div class="vl" style="left:1221px;top:651px">2595</div><div class="lb" style="left:974px;top:676px">Height 1</div><div class="vl" style="left:1221px;top:676px">2095</div><div class="lb" style="left:974px;top:701px">Height 2</div><div class="vl" style="left:1221px;top:701px">500</div><div class="ttl" style="left:299px;top:739px">NOVA DLP</div><div class="ttl" style="left:944px;top:739px">NOVA DLPG</div><svg class="a" style="left:50px;top:230px" width="130" height="240" viewBox="50 230 130 240"><rect x="61.5" y="237.5" width="98.0" height="211.5" fill="url(#gran)" stroke="#0a0a0a" stroke-width="1.2"/><rect x="65.5" y="241.5" width="90.0" height="207.0" fill="url(#gran)" stroke="#0a0a0a" stroke-width="1.3"/><path d="M61.5 237.5 L65.5 241.5" stroke="#0a0a0a" stroke-width="0.8" fill="none"/><path d="M159.5 237.5 L155.5 241.5" stroke="#0a0a0a" stroke-width="0.8" fill="none"/><rect x="122" y="243.0" width="18" height="205.0" fill="url(#bar)"/><rect x="126.25" y="277" width="8.5" height="135" fill="url(#bglass)"/><rect x="143" y="243.0" width="2" height="205.0" fill="#c4c4c4"/><rect x="145" y="243.0" width="0.8" height="205.0" fill="#8a8a8a"/><rect x="149" y="243.0" width="2" height="205.0" fill="#c4c4c4"/><rect x="151" y="243.0" width="0.8" height="205.0" fill="#8a8a8a"/><rect x="71.3" y="336" width="6.3" height="6.7" fill="#050505"/><rect x="72.2" y="337.1" width="4.6" height="1.2" fill="#dcdcdc"/><rect x="72.2" y="340.6" width="4.6" height="1.2" fill="#dcdcdc"/><rect x="72.5" y="337.8" width="13.3" height="3" rx="1" fill="#050505"/><rect x="73.3" y="338.8" width="11.7" height="1.1" fill="#e6e6e6"/><rect x="71.3" y="345" width="6.3" height="6.7" fill="#050505"/><rect x="72.3" y="346" width="4.3" height="4.7" fill="#d8d8d8"/><rect x="73.3" y="347.2" width="2.3" height="2.5" fill="#050505"/><text x="81.5" y="430" font-size="14.5" fill="#0d0d0d" text-anchor="start" font-family="Liberation Sans">1</text><path d="M160 237.5 L170 237.5" stroke="#111" stroke-width="1" fill="none"/><path d="M160 449.5 L170 449.5" stroke="#111" stroke-width="1" fill="none"/><path d="M167.5 235.0 L167.5 452.0" stroke="#111" stroke-width="1" fill="none"/><path d="M165.0 237.5 L170.0 237.5" stroke="#111" stroke-width="1" fill="none"/><path d="M165.0 449.5 L170.0 449.5" stroke="#111" stroke-width="1" fill="none"/><text x="165.5" y="346" font-size="7" fill="#444" text-anchor="start" font-family="Liberation Sans" transform="rotate(-90 165.5 346)">W</text><path d="M61.5 449 L61.5 460" stroke="#111" stroke-width="1" fill="none"/><path d="M159.5 449 L159.5 460" stroke="#111" stroke-width="1" fill="none"/><path d="M59.0 457.5 L162.0 457.5" stroke="#111" stroke-width="1" fill="none"/><path d="M61.5 455.0 L61.5 460.0" stroke="#111" stroke-width="1" fill="none"/><path d="M159.5 455.0 L159.5 460.0" stroke="#111" stroke-width="1" fill="none"/><text x="110" y="455.5" font-size="6.5" fill="#444" text-anchor="middle" font-family="Liberation Sans">S</text></svg><svg class="a" style="left:695px;top:228px" width="115" height="240" viewBox="695 228 115 240"><rect x="705.5" y="236.5" width="81.0" height="42.5" fill="url(#gran)" stroke="#0a0a0a" stroke-width="1.2"/><rect x="710.0" y="241.20000000000002" width="72.0" height="32.5" fill="url(#gran)" stroke="#0a0a0a" stroke-width="1.3"/><rect x="711.9" y="242.9" width="68.2" height="29.1" fill="url(#glass)" stroke="#0a0a0a" stroke-width="1.2"/><path d="M705.5 236.5 L710.0 241.20000000000002" stroke="#0a0a0a" stroke-width="0.8" fill="none"/><path d="M786.5 236.5 L782.0 241.20000000000002" stroke="#0a0a0a" stroke-width="0.8" fill="none"/><path d="M705.5 279 L710.0 273.7" stroke="#0a0a0a" stroke-width="0.8" fill="none"/><path d="M786.5 279 L782.0 273.7" stroke="#0a0a0a" stroke-width="0.8" fill="none"/><text x="717.5" y="259" font-size="14.5" fill="#0d0d0d" text-anchor="start" font-family="Liberation Sans">2</text><rect x="705.5" y="279" width="81.0" height="173.5" fill="url(#gran)" stroke="#0a0a0a" stroke-width="1.2"/><rect x="709.5" y="283" width="73.0" height="169.0" fill="url(#gran)" stroke="#0a0a0a" stroke-width="1.3"/><path d="M705.5 279 L709.5 283" stroke="#0a0a0a" stroke-width="0.8" fill="none"/><path d="M786.5 279 L782.5 283" stroke="#0a0a0a" stroke-width="0.8" fill="none"/><rect x="755" y="284.5" width="15" height="167.0" fill="url(#bar)"/><rect x="758.75" y="311" width="6.5" height="111" fill="url(#bglass)"/><rect x="772" y="284.5" width="2" height="167.0" fill="#c4c4c4"/><rect x="774" y="284.5" width="0.8" height="167.0" fill="#8a8a8a"/><rect x="776.7" y="284.5" width="2" height="167.0" fill="#c4c4c4"/><rect x="778.7" y="284.5" width="0.8" height="167.0" fill="#8a8a8a"/><rect x="713.2" y="358.9" width="6.3" height="6.7" fill="#050505"/><rect x="714.1" y="360.0" width="4.6" height="1.2" fill="#dcdcdc"/><rect x="714.1" y="363.5" width="4.6" height="1.2" fill="#dcdcdc"/><rect x="714.4000000000001" y="360.7" width="11.5" height="3" rx="1" fill="#050505"/><rect x="715.2" y="361.7" width="9.899999999999999" height="1.1" fill="#e6e6e6"/><rect x="713.2" y="367.9" width="6.3" height="6.7" fill="#050505"/><rect x="714.2" y="368.9" width="4.3" height="4.7" fill="#d8d8d8"/><rect x="715.2" y="370.09999999999997" width="2.3" height="2.5" fill="#050505"/><text x="722.5" y="434" font-size="14.5" fill="#0d0d0d" text-anchor="start" font-family="Liberation Sans">1</text><path d="M787 236.5 L803 236.5" stroke="#111" stroke-width="1" fill="none"/><path d="M787 452.5 L803 452.5" stroke="#111" stroke-width="1" fill="none"/><path d="M792.5 234.0 L792.5 455.0" stroke="#111" stroke-width="1" fill="none"/><path d="M790.0 236.5 L795.0 236.5" stroke="#111" stroke-width="1" fill="none"/><path d="M790.0 452.5 L795.0 452.5" stroke="#111" stroke-width="1" fill="none"/><path d="M790.0 278.5 L795.0 278.5" stroke="#111" stroke-width="1" fill="none"/><path d="M799.5 234.0 L799.5 455.0" stroke="#111" stroke-width="1" fill="none"/><path d="M797.0 236.5 L802.0 236.5" stroke="#111" stroke-width="1" fill="none"/><path d="M797.0 452.5 L802.0 452.5" stroke="#111" stroke-width="1" fill="none"/><text x="793.5" y="270" font-size="6" fill="#444" text-anchor="start" font-family="Liberation Sans" transform="rotate(-90 793.5 270)">W2 = 500</text><text x="793.5" y="385" font-size="6" fill="#444" text-anchor="start" font-family="Liberation Sans" transform="rotate(-90 793.5 385)">W1 = 2 095</text><text x="800.5" y="365" font-size="6" fill="#444" text-anchor="start" font-family="Liberation Sans" transform="rotate(-90 800.5 365)">W = 2 595</text><path d="M705.5 452.5 L705.5 462" stroke="#111" stroke-width="1" fill="none"/><path d="M786.5 452.5 L786.5 462" stroke="#111" stroke-width="1" fill="none"/><path d="M703.0 459.5 L789.0 459.5" stroke="#111" stroke-width="1" fill="none"/><path d="M705.5 457.0 L705.5 462.0" stroke="#111" stroke-width="1" fill="none"/><path d="M786.5 457.0 L786.5 462.0" stroke="#111" stroke-width="1" fill="none"/><text x="746" y="457.5" font-size="6" fill="#444" text-anchor="middle" font-family="Liberation Sans">S = 980</text></svg><svg class="a" style="left:50px;top:478px" width="175" height="240" viewBox="50 478 175 240"><rect x="60.5" y="487" width="50.0" height="206" fill="url(#gran)" stroke="#0a0a0a" stroke-width="1.2"/><rect x="66.1" y="492.8" width="38.8" height="194.4" fill="url(#gran)" stroke="#0a0a0a" stroke-width="1.3"/><rect x="68.0" y="494.5" width="35.0" height="191.0" fill="url(#glass)" stroke="#0a0a0a" stroke-width="1.2"/><path d="M60.5 487 L66.1 492.8" stroke="#0a0a0a" stroke-width="0.8" fill="none"/><path d="M110.5 487 L104.9 492.8" stroke="#0a0a0a" stroke-width="0.8" fill="none"/><path d="M60.5 693 L66.1 687.2" stroke="#0a0a0a" stroke-width="0.8" fill="none"/><path d="M110.5 693 L104.9 687.2" stroke="#0a0a0a" stroke-width="0.8" fill="none"/><rect x="110.5" y="487" width="96.0" height="206" fill="url(#gran)" stroke="#0a0a0a" stroke-width="1.2"/><rect x="114.5" y="491" width="88.0" height="201.5" fill="url(#gran)" stroke="#0a0a0a" stroke-width="1.3"/><path d="M110.5 487 L114.5 491" stroke="#0a0a0a" stroke-width="0.8" fill="none"/><path d="M206.5 487 L202.5 491" stroke="#0a0a0a" stroke-width="0.8" fill="none"/><rect x="169" y="492.5" width="17" height="199.5" fill="url(#bar)"/><rect x="172.75" y="526" width="8.5" height="131" fill="url(#bglass)"/><rect x="190" y="492.5" width="2" height="199.5" fill="#c4c4c4"/><rect x="192" y="492.5" width="0.8" height="199.5" fill="#8a8a8a"/><rect x="196" y="492.5" width="2" height="199.5" fill="#c4c4c4"/><rect x="198" y="492.5" width="0.8" height="199.5" fill="#8a8a8a"/><rect x="120.2" y="583.1" width="6.3" height="6.7" fill="#050505"/><rect x="121.10000000000001" y="584.2" width="4.6" height="1.2" fill="#dcdcdc"/><rect x="121.10000000000001" y="587.7" width="4.6" height="1.2" fill="#dcdcdc"/><rect x="121.4" y="584.9" width="12.4" height="3" rx="1" fill="#050505"/><rect x="122.2" y="585.9" width="10.8" height="1.1" fill="#e6e6e6"/><rect x="120.2" y="592.1" width="6.3" height="6.7" fill="#050505"/><rect x="121.2" y="593.1" width="4.3" height="4.7" fill="#d8d8d8"/><rect x="122.2" y="594.3000000000001" width="2.3" height="2.5" fill="#050505"/><text x="76" y="671" font-size="14.5" fill="#0d0d0d" text-anchor="start" font-family="Liberation Sans">1</text><text x="130" y="671" font-size="14.5" fill="#0d0d0d" text-anchor="start" font-family="Liberation Sans">2</text><path d="M207 487 L219 487" stroke="#111" stroke-width="1" fill="none"/><path d="M207 693 L219 693" stroke="#111" stroke-width="1" fill="none"/><path d="M215.5 484.5 L215.5 695.5" stroke="#111" stroke-width="1" fill="none"/><path d="M213.0 487 L218.0 487" stroke="#111" stroke-width="1" fill="none"/><path d="M213.0 693 L218.0 693" stroke="#111" stroke-width="1" fill="none"/><text x="213.5" y="608" font-size="6.5" fill="#444" text-anchor="start" font-family="Liberation Sans" transform="rotate(-90 213.5 608)">W = 2 095</text><path d="M60.5 693 L60.5 712" stroke="#111" stroke-width="1" fill="none"/><path d="M206.5 693 L206.5 712" stroke="#111" stroke-width="1" fill="none"/><path d="M58.0 700.5 L209.0 700.5" stroke="#111" stroke-width="1" fill="none"/><path d="M60.5 698.0 L60.5 703.0" stroke="#111" stroke-width="1" fill="none"/><path d="M206.5 698.0 L206.5 703.0" stroke="#111" stroke-width="1" fill="none"/><path d="M110.5 698.0 L110.5 703.0" stroke="#111" stroke-width="1" fill="none"/><path d="M58.0 709.5 L209.0 709.5" stroke="#111" stroke-width="1" fill="none"/><path d="M60.5 707.0 L60.5 712.0" stroke="#111" stroke-width="1" fill="none"/><path d="M206.5 707.0 L206.5 712.0" stroke="#111" stroke-width="1" fill="none"/><text x="85" y="698.5" font-size="6.5" fill="#444" text-anchor="middle" font-family="Liberation Sans">S1 = 500</text><text x="158" y="698.5" font-size="6.5" fill="#444" text-anchor="middle" font-family="Liberation Sans">S2 = 980</text><text x="133" y="707.5" font-size="6.5" fill="#444" text-anchor="middle" font-family="Liberation Sans">S = 1 480</text></svg><svg class="a" style="left:695px;top:478px" width="160" height="240" viewBox="695 478 160 240"><rect x="705.5" y="486.5" width="119.0" height="39.5" fill="url(#gran)" stroke="#0a0a0a" stroke-width="1.2"/><rect x="709.0" y="490.2" width="112.0" height="32.1" fill="url(#gran)" stroke="#0a0a0a" stroke-width="1.3"/><rect x="710.9" y="491.9" width="108.2" height="28.700000000000003" fill="url(#glass)" stroke="#0a0a0a" stroke-width="1.2"/><path d="M705.5 486.5 L709.0 490.2" stroke="#0a0a0a" stroke-width="0.8" fill="none"/><path d="M824.5 486.5 L821.0 490.2" stroke="#0a0a0a" stroke-width="0.8" fill="none"/><path d="M705.5 526 L709.0 522.3000000000001" stroke="#0a0a0a" stroke-width="0.8" fill="none"/><path d="M824.5 526 L821.0 522.3000000000001" stroke="#0a0a0a" stroke-width="0.8" fill="none"/><text x="717" y="509" font-size="14.5" fill="#0d0d0d" text-anchor="start" font-family="Liberation Sans">3</text><rect x="705.5" y="526" width="39.5" height="170" fill="url(#gran)" stroke="#0a0a0a" stroke-width="1.2"/><rect x="708.8000000000001" y="529.5" width="32.9" height="163.00000000000003" fill="url(#gran)" stroke="#0a0a0a" stroke-width="1.3"/><rect x="710.7" y="531.2" width="29.1" height="159.60000000000002" fill="url(#glass)" stroke="#0a0a0a" stroke-width="1.2"/><path d="M705.5 526 L708.8000000000001 529.5" stroke="#0a0a0a" stroke-width="0.8" fill="none"/><path d="M745 526 L741.6999999999999 529.5" stroke="#0a0a0a" stroke-width="0.8" fill="none"/><path d="M705.5 696 L708.8000000000001 692.5" stroke="#0a0a0a" stroke-width="0.8" fill="none"/><path d="M745 696 L741.6999999999999 692.5" stroke="#0a0a0a" stroke-width="0.8" fill="none"/><rect x="745" y="526" width="79.5" height="170" fill="url(#gran)" stroke="#0a0a0a" stroke-width="1.2"/><rect x="748.5" y="530.5" width="73" height="165" fill="url(#gran)" stroke="#0a0a0a" stroke-width="1.3"/><path d="M745 526 L748.5 530.5" stroke="#0a0a0a" stroke-width="0.8" fill="none"/><path d="M824.5 526 L821.5 530.5" stroke="#0a0a0a" stroke-width="0.8" fill="none"/><text x="717" y="679" font-size="14.5" fill="#0d0d0d" text-anchor="start" font-family="Liberation Sans">1</text><text x="761" y="679" font-size="14.5" fill="#0d0d0d" text-anchor="start" font-family="Liberation Sans">2</text><path d="M825 486.5 L842 486.5" stroke="#111" stroke-width="1" fill="none"/><path d="M825 696.5 L842 696.5" stroke="#111" stroke-width="1" fill="none"/><path d="M831.5 484.0 L831.5 698.5" stroke="#111" stroke-width="1" fill="none"/><path d="M829.0 486.5 L834.0 486.5" stroke="#111" stroke-width="1" fill="none"/><path d="M829.0 696 L834.0 696" stroke="#111" stroke-width="1" fill="none"/><path d="M829.0 526 L834.0 526" stroke="#111" stroke-width="1" fill="none"/><path d="M838.5 484.0 L838.5 698.5" stroke="#111" stroke-width="1" fill="none"/><path d="M836.0 486.5 L841.0 486.5" stroke="#111" stroke-width="1" fill="none"/><path d="M836.0 696 L841.0 696" stroke="#111" stroke-width="1" fill="none"/><text x="831.5" y="512" font-size="6" fill="#444" text-anchor="start" font-family="Liberation Sans" transform="rotate(-90 831.5 512)">W2</text><text x="831.5" y="617" font-size="6" fill="#444" text-anchor="start" font-family="Liberation Sans" transform="rotate(-90 831.5 617)">W1</text><text x="838.5" y="595" font-size="6" fill="#444" text-anchor="start" font-family="Liberation Sans" transform="rotate(-90 838.5 595)">W</text><path d="M705.5 696 L705.5 712" stroke="#111" stroke-width="1" fill="none"/><path d="M824.5 696 L824.5 712" stroke="#111" stroke-width="1" fill="none"/><path d="M703.0 703.5 L827.0 703.5" stroke="#111" stroke-width="1" fill="none"/><path d="M705.5 701.0 L705.5 706.0" stroke="#111" stroke-width="1" fill="none"/><path d="M824.5 701.0 L824.5 706.0" stroke="#111" stroke-width="1" fill="none"/><path d="M745 701.0 L745 706.0" stroke="#111" stroke-width="1" fill="none"/><path d="M703.0 709.5 L827.0 709.5" stroke="#111" stroke-width="1" fill="none"/><path d="M705.5 707.0 L705.5 712.0" stroke="#111" stroke-width="1" fill="none"/><path d="M824.5 707.0 L824.5 712.0" stroke="#111" stroke-width="1" fill="none"/><text x="725" y="701.5" font-size="6" fill="#444" text-anchor="middle" font-family="Liberation Sans">S1</text><text x="785" y="701.5" font-size="6" fill="#444" text-anchor="middle" font-family="Liberation Sans">S2</text><text x="765" y="707.5" font-size="6" fill="#444" text-anchor="middle" font-family="Liberation Sans">S</text></svg><svg class="a" style="left:50px;top:728px" width="225" height="30" viewBox="50 728 225 30"><rect x="60.5" y="736.5" width="49.0" height="63.5" fill="url(#gran)" stroke="#0a0a0a" stroke-width="1.2"/><rect x="65.89999999999999" y="742.0999999999999" width="38.199999999999996" height="52.300000000000004" fill="url(#gran)" stroke="#0a0a0a" stroke-width="1.3"/><rect x="67.8" y="743.8" width="34.4" height="48.900000000000006" fill="url(#glass)" stroke="#0a0a0a" stroke-width="1.2"/><path d="M60.5 736.5 L65.89999999999999 742.0999999999999" stroke="#0a0a0a" stroke-width="0.8" fill="none"/><path d="M109.5 736.5 L104.10000000000001 742.0999999999999" stroke="#0a0a0a" stroke-width="0.8" fill="none"/><path d="M60.5 800 L65.89999999999999 794.4000000000001" stroke="#0a0a0a" stroke-width="0.8" fill="none"/><path d="M109.5 800 L104.10000000000001 794.4000000000001" stroke="#0a0a0a" stroke-width="0.8" fill="none"/><rect x="109.5" y="736.5" width="97" height="64" fill="url(#gran)" stroke="#0a0a0a" stroke-width="1.2"/><rect x="114.5" y="740.5" width="87.5" height="60" fill="url(#gran)" stroke="#0a0a0a" stroke-width="1.3"/><path d="M110.5 736.5 L114.5 740.5" stroke="#0a0a0a" stroke-width="0.8" fill="none"/><path d="M206 736.5 L202 740.5" stroke="#0a0a0a" stroke-width="0.8" fill="none"/><rect x="206.5" y="736.5" width="49.5" height="63.5" fill="url(#gran)" stroke="#0a0a0a" stroke-width="1.2"/><rect x="211.79999999999998" y="742.0" width="38.9" height="52.49999999999999" fill="url(#gran)" stroke="#0a0a0a" stroke-width="1.3"/><rect x="213.7" y="743.7" width="35.1" height="49.099999999999994" fill="url(#glass)" stroke="#0a0a0a" stroke-width="1.2"/><path d="M206.5 736.5 L211.79999999999998 742.0" stroke="#0a0a0a" stroke-width="0.8" fill="none"/><path d="M256 736.5 L250.70000000000002 742.0" stroke="#0a0a0a" stroke-width="0.8" fill="none"/><path d="M206.5 800 L211.79999999999998 794.5" stroke="#0a0a0a" stroke-width="0.8" fill="none"/><path d="M256 800 L250.70000000000002 794.5" stroke="#0a0a0a" stroke-width="0.8" fill="none"/><path d="M257 736.5 L266 736.5" stroke="#111" stroke-width="1" fill="none"/><path d="M263.5 734.0 L263.5 802.5" stroke="#111" stroke-width="1" fill="none"/><path d="M261.0 736.5 L266.0 736.5" stroke="#111" stroke-width="1" fill="none"/><path d="M261.0 800 L266.0 800" stroke="#111" stroke-width="1" fill="none"/></svg><svg class="a" style="left:695px;top:728px" width="195" height="30" viewBox="695 728 195 30"><rect x="705" y="736.5" width="159.5" height="63.5" fill="url(#gran)" stroke="#0a0a0a" stroke-width="1.2"/><rect x="708.5" y="740.1999999999999" width="152.5" height="56.1" fill="url(#gran)" stroke="#0a0a0a" stroke-width="1.3"/><rect x="710.4" y="741.9" width="148.7" height="52.7" fill="url(#glass)" stroke="#0a0a0a" stroke-width="1.2"/><path d="M705 736.5 L708.5 740.1999999999999" stroke="#0a0a0a" stroke-width="0.8" fill="none"/><path d="M864.5 736.5 L861.0 740.1999999999999" stroke="#0a0a0a" stroke-width="0.8" fill="none"/><path d="M705 800 L708.5 796.3000000000001" stroke="#0a0a0a" stroke-width="0.8" fill="none"/><path d="M864.5 800 L861.0 796.3000000000001" stroke="#0a0a0a" stroke-width="0.8" fill="none"/><text x="717" y="759" font-size="14.5" fill="#0d0d0d" text-anchor="start" font-family="Liberation Sans">4</text><path d="M865 736.5 L881 736.5" stroke="#111" stroke-width="1" fill="none"/><path d="M871.5 734.0 L871.5 802.5" stroke="#111" stroke-width="1" fill="none"/><path d="M869.0 736.5 L874.0 736.5" stroke="#111" stroke-width="1" fill="none"/><path d="M869.0 800 L874.0 800" stroke="#111" stroke-width="1" fill="none"/><path d="M877.5 734.0 L877.5 802.5" stroke="#111" stroke-width="1" fill="none"/><path d="M875.0 736.5 L880.0 736.5" stroke="#111" stroke-width="1" fill="none"/><path d="M875.0 800 L880.0 800" stroke="#111" stroke-width="1" fill="none"/><text x="868" y="756" font-size="6" fill="#444" text-anchor="start" font-family="Liberation Sans" transform="rotate(-90 868 756)">W2</text></svg></div></div><div class="a" style="left:0;top:0;width:1621px;height:1px;background:#6e6e6e"></div><div class="a" style="left:0;top:0;width:1px;height:826px;background:#5a5a5a"></div><div class="a" style="left:1px;top:823px;width:1620px;height:1px;background:#ffffff"></div><div class="a" style="left:0;top:824px;width:1621px;height:2px;background:#555"></div><div class="a" style="left:0;top:0;width:1621px;height:8px;background:#6e6e6e"></div><div class="a" style="left:294px;top:0;width:92px;height:1px;background:#000"></div><div class="a" style="left:1px;top:1px;width:1620px;height:48px;background:#5bc5d1;border-radius:4px 4px 0 0"></div><svg class="a" style="left:0;top:0" width="50" height="50" viewBox="0 0 50 50">
<path d="M17 12 H33 Q34 12 34 13 V28 L25 34 L16 28 V13 Q16 12 17 12 Z" fill="#fff"/>
<path d="M18.6 21.4 L23.1 26.2 L31.5 17.3" stroke="#5bc5d1" stroke-width="2" fill="none"/>
</svg><div class="a" style="left:0;top:16px;width:1526px;text-align:center;color:#fff;font-size:16.5px;line-height:18px;-webkit-text-stroke:0.35px #fff;letter-spacing:0.1px">Offer OT/71835/24/03883</div><div class="a" style="left:1495px;top:32px;width:12px;height:2px;background:#fff"></div><div class="a" style="left:1540px;top:17px;width:18px;height:16px;border:2px solid #fff;border-top-width:3px;border-radius:2.5px"></div><svg class="a" style="left:1589px;top:17px" width="16" height="16" viewBox="0 0 16 16"><path d="M1.5 1.5 L14.5 14.5 M14.5 1.5 L1.5 14.5" stroke="#fff" stroke-width="1.8"/></svg><svg class="a" style="left:25px;top:73px" width="24" height="24" viewBox="0 0 24 24"><circle cx="12" cy="12" r="12" fill="#2fb5c5"/><path d="M5.5 12.3 L9.8 16.3 L18.3 7.8" stroke="#fff" stroke-width="2.2" fill="none"/></svg><div class="a" id="st1" style="left:57px;top:77px;font-size:14px;line-height:16px;color:#262626;-webkit-text-stroke:0.4px currentColor;letter-spacing:0.26px">Offer header created: OT/71835/24/03883</div><div class="a" style="left:337px;top:85px;width:287px;height:1px;background:#bdbdbd"></div><div class="a" style="left:632px;top:73px;width:24px;height:24px;border-radius:50%;background:#9e9e9e;color:#1a1a1a;font-size:12px;line-height:24px;text-align:center">2</div><div class="a" id="st2" style="left:664px;top:77px;font-size:14px;line-height:16px;color:#262626;-webkit-text-stroke:0.4px currentColor;letter-spacing:0.2px">Items</div><div class="a" style="left:708px;top:85px;width:287px;height:1px;background:#bdbdbd"></div><div class="a" style="left:1003px;top:73px;width:24px;height:24px;border-radius:50%;background:#9e9e9e;color:#1a1a1a;font-size:12px;line-height:24px;text-align:center">3</div><div class="a" id="st3" style="left:1035px;top:77px;font-size:14px;line-height:16px;color:#757575;letter-spacing:0.25px">Adding attachments</div><div class="a" style="left:1171px;top:85px;width:287px;height:1px;background:#bdbdbd"></div><div class="a" style="left:1466px;top:73px;width:24px;height:24px;border-radius:50%;background:#9e9e9e;color:#1a1a1a;font-size:12px;line-height:24px;text-align:center">4</div><div class="a" id="st4" style="left:1498px;top:77px;font-size:14px;line-height:16px;color:#757575">End-consumers</div><div class="a" id="tb1" style="left:33px;top:137px;width:160px;font-size:13px;line-height:20px;color:#757575;text-align:center;letter-spacing:-0.4px;-webkit-text-stroke:0.35px currentColor">PRODUCTS</div><div class="a" id="tb2" style="left:193px;top:127px;width:264px;white-space:normal;font-size:13px;line-height:20px;color:#757575;text-align:center;letter-spacing:-0.4px;-webkit-text-stroke:0.35px currentColor">PRODUCTS ACCORDING TO THE<br>EAN CODE</div><div class="a" id="tb3" style="left:457px;top:137px;width:160px;font-size:13px;line-height:20px;color:#757575;text-align:center;letter-spacing:-0.4px;-webkit-text-stroke:0.35px currentColor;color:#9a9a9a">JOINERY</div><div class="a" style="left:457px;top:170px;width:160px;height:2px;background:#9e9e9e"></div><svg class="a" style="left:620px;top:130px" width="210" height="35" viewBox="620 130 210 35"><path d="M652 148.3 L817.3 145.6" stroke="#f00" stroke-width="5" stroke-linecap="round"/><path d="M631.7 148.5 L656.7 140.6 L656.7 155.6 Z" fill="#f00"/></svg><div class="a" id="tb4" style="left:33px;top:186px;width:160px;font-size:13px;line-height:20px;color:#757575;text-align:center;letter-spacing:-0.4px;-webkit-text-stroke:0.35px currentColor;color:#222">NOVA</div><div class="a" style="left:33px;top:218px;width:160px;height:2px;background:#2fb5c5"></div><div class="a" style="left:1572px;top:121px;width:17px;height:634px;background:#f1f1f1"></div><div class="a" style="left:1574px;top:138px;width:13px;height:277px;background:#c1c1c1"></div><svg class="a" style="left:1572px;top:121px" width="17" height="17"><path d="M4.5 11 L12.5 11 L8.5 6.5 Z" fill="#a3a3a3"/></svg><svg class="a" style="left:1572px;top:738px" width="17" height="17"><path d="M4.5 6 L12.5 6 L8.5 10.5 Z" fill="#505050"/></svg><div class="a" style="left:33px;top:755px;width:1539px;height:13px;background:#f1f1f1"></div><div class="a" style="left:50px;top:757px;width:1501px;height:11px;background:#c1c1c1"></div><div class="a" style="left:33px;top:755px;width:8px;height:17px;background:#f1f1f1"></div><svg class="a" style="left:33px;top:755px" width="17" height="17"><path d="M10.2 4.8 L10.2 12 L5.9 8.4 Z" fill="#a3a3a3"/></svg><svg class="a" style="left:1555px;top:755px" width="17" height="17"><path d="M6.8 4.8 L6.8 12 L11.2 8.4 Z" fill="#505050"/></svg><div class="a" style="left:1572px;top:755px;width:17px;height:13px;background:#dcdcdc"></div><div class="btn" style="left:927px;width:98px;background:#e0e0e0;box-shadow:0 3px 1px -2px rgba(0,0,0,0.2),0 2px 2px 0 rgba(0,0,0,0.14),0 1px 5px 0 rgba(0,0,0,0.12)"></div><div class="btn" style="left:1041px;width:126px"></div><div class="btn" style="left:1183px;width:144px"></div><div class="btn" style="left:1343px;width:149px"></div><div class="btn" style="left:1508px;width:105px;background:#2eb6c6;box-shadow:0 3px 1px -2px rgba(0,0,0,0.2),0 2px 2px 0 rgba(0,0,0,0.14),0 1px 5px 0 rgba(0,0,0,0.12)"></div><svg class="a" style="left:920px;top:770px" width="701" height="50" viewBox="920 770 701 50">
<path d="M963.5 796 H949 M955.5 789 L948.5 796 L955.5 803" stroke="#1a1a1a" stroke-width="2" fill="none"/>
<path d="M1069 789 V803 M1062 796 H1076" stroke="#a3a3a3" stroke-width="2" fill="none"/>
<path d="M1201.2 789.2 V805.5 H1218" stroke="#a3a3a3" stroke-width="2" fill="none"/>
<rect x="1205.2" y="786" width="15.8" height="15.6" rx="1" stroke="#a3a3a3" stroke-width="2" fill="none"/>
<path d="M1211 790.6 L1213.6 789.3 V798.6" stroke="#a3a3a3" stroke-width="1.7" fill="none"/>
<path d="M1364 787.8 H1368 L1369 787 H1373 L1374 787.8 H1378 V790.3 H1364 Z M1365 791.2 H1377 V803.4 Q1377 804.7 1375.7 804.7 H1366.3 Q1365 804.7 1365 803.4 Z" fill="#a3a3a3"/>
<path d="M1528.2 787 H1541 L1545 791 V803.5 Q1545 804.7 1543.8 804.7 H1528.2 Q1527 804.7 1527 803.5 V788.2 Q1527 787 1528.2 787 Z" fill="#0a1a1d"/>
<rect x="1529" y="789" width="10" height="3.8" fill="#2eb6c6"/>
<circle cx="1536" cy="800" r="3" fill="#2eb6c6"/>
</svg><div class="a" style="left:971.5px;top:789px;font-size:14px;line-height:14px;letter-spacing:-0.1px;-webkit-text-stroke:0.35px currentColor;color:#1f1f1f;letter-spacing:-0.5px">BACK</div><div class="a" style="left:1085px;top:789px;font-size:14px;line-height:14px;letter-spacing:-0.1px;-webkit-text-stroke:0.35px currentColor;color:#a3a3a3">ADD ITEM</div><div class="a" style="left:1228px;top:789px;font-size:14px;line-height:14px;letter-spacing:-0.1px;-webkit-text-stroke:0.35px currentColor;color:#a3a3a3">CLONE ITEM</div><div class="a" style="left:1387.5px;top:789px;font-size:14px;line-height:14px;letter-spacing:-0.1px;-webkit-text-stroke:0.35px currentColor;color:#a3a3a3;letter-spacing:-0.2px">DELETE ITEM</div><div class="a" style="left:1560.5px;top:789px;font-size:14px;line-height:14px;letter-spacing:-0.1px;-webkit-text-stroke:0.35px currentColor;color:#0a1a1d;letter-spacing:-0.6px">NEXT</div></body></html>
